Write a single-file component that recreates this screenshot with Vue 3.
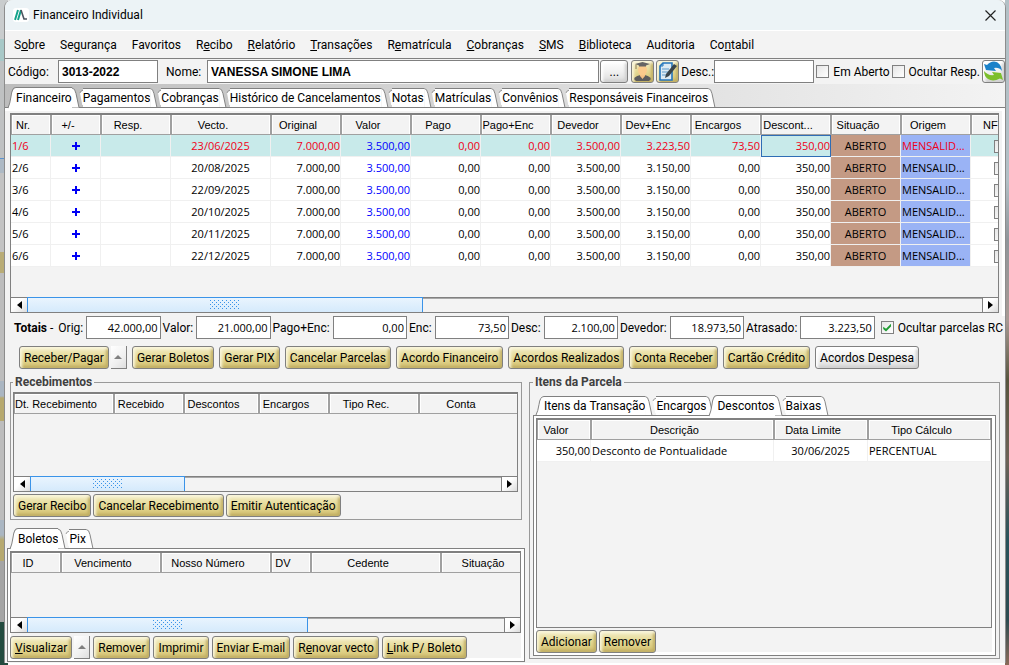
<script setup>
import { ref } from 'vue'

const menu = [
  ['S', 'o', 'bre'], ['Se', 'g', 'urança'], ['Favoritos', '', ''], ['R', 'e', 'cibo'],
  ['', 'R', 'elatório'], ['', 'T', 'ransações'], ['R', 'e', 'matrícula'], ['', 'C', 'obranças'],
  ['', 'S', 'MS'], ['', 'B', 'iblioteca'], ['Auditoria', '', ''], ['Co', 'n', 'tabil']
]
const mainTabs = ['Financeiro', 'Pagamentos', 'Cobranças', 'Histórico de Cancelamentos', 'Notas', 'Matrículas', 'Convênios', 'Responsáveis Financeiros']
const itemTabs = ['Itens da Transação', 'Encargos', 'Descontos', 'Baixas']
const slipTabs = ['Boletos', 'Pix']

const cols = [
  ['Nr.', 40, 'l'], ['+/-', 50], ['Resp.', 70], ['Vecto.', 100], ['Original', 70],
  ['Valor', 70], ['Pago', 70], ['Pago+Enc', 70], ['Devedor', 70], ['Dev+Enc', 70],
  ['Encargos', 70], ['Descont...', 70], ['Situação', 70], ['Origem', 70], ['NF', 60, 'nf']
]
const rows = [
  ['1/6', '23/06/2025', '3.223,50', '73,50'],
  ['2/6', '20/08/2025', '3.150,00', '0,00'],
  ['3/6', '22/09/2025', '3.150,00', '0,00'],
  ['4/6', '20/10/2025', '3.150,00', '0,00'],
  ['5/6', '20/11/2025', '3.150,00', '0,00'],
  ['6/6', '22/12/2025', '3.150,00', '0,00']
]
const totals = [
  ['Orig:', '42.000,00'], ['Valor:', '21.000,00'], ['Pago+Enc:', '0,00'], ['Enc:', '73,50'],
  ['Desc:', '2.100,00'], ['Devedor:', '18.973,50'], ['Atrasado:', '3.223,50']
]
const actions = ['Gerar Boletos', 'Gerar PIX', 'Cancelar Parcelas', 'Acordo Financeiro', 'Acordos Realizados', 'Conta Receber', 'Cartão Crédito']
const receiptCols = [['Dt. Recebimento', 100], ['Recebido', 70], ['Descontos', 75], ['Encargos', 70], ['Tipo Rec.', 90], ['Conta', 100]]
const slipCols = [['ID', 50], ['Vencimento', 100], ['Nosso Número', 110], ['DV', 40], ['Cedente', 130], ['Situação', 100]]
const itemCols = [['Valor', 54], ['Descrição', 183], ['Data Limite', 94], ['Tipo Cálculo', 123]]
const thumbs = { main: 41.5, receipts: 33, slips: 59 }

const code = ref('3013-2022')
const name = ref('VANESSA SIMONE LIMA')
const desc = ref('')
const onlyOpen = ref(false)
const hideResp = ref(false)
const hideRc = ref(true)
</script>

<template>
  <div class="desktop">
    <main class="window">
      <header class="title">
        <svg class="logo" viewBox="0 0 14 12" width="14" height="12" aria-hidden="true">
          <path d="M1 11 L4 1 M4 11 L7 1" stroke="#14a38b" stroke-width="2" fill="none" />
          <path d="M7 1 L10 10 H13" stroke="#4b5560" stroke-width="1.6" fill="none" />
        </svg>
        <h1>Financeiro Individual</h1>
        <button class="close" aria-label="Fechar">
          <svg viewBox="0 0 11 11" width="11" height="11"><path d="M.5 .5 L10.5 10.5 M10.5 .5 L.5 10.5" stroke="#222" stroke-width="1.2" /></svg>
        </button>
      </header>

      <nav class="menu">
        <a v-for="m in menu" :key="m.join('')" href="#">{{ m[0] }}<u>{{ m[1] }}</u>{{ m[2] }}</a>
      </nav>

      <section class="search">
        <label class="lab-code" for="code">Código:</label>
        <input id="code" v-model="code" class="field short strong" type="text">
        <label class="lab-name" for="name">Nome:</label>
        <input id="name" v-model="name" class="field grow strong" type="text">
        <button class="btn plain dots">...</button>
        <button class="btn icon" aria-label="Aluno">
          <svg viewBox="0 0 21 21" width="21" height="21">
            <path d="M2 18 Q4 14 10.5 14 Q17 14 19 18 L17 20 H4Z" fill="#5d5d5d" />
            <path d="M8 12 H13 V15 L10.5 18 L8 15Z" fill="#f5c083" />
            <ellipse cx="10.5" cy="9" rx="4.500" ry="5.500" fill="#fbcb8c" />
            <path d="M3 3 L10.5 1 L18 3 L14 4.5 V5.500 H7 V4.5Z" fill="#656565" />
            <path d="M4 3.5 V8" stroke="#8b7a55" />
          </svg>
        </button>
        <button class="btn icon" aria-label="Anotações">
          <svg viewBox="0 0 21 21" width="21" height="21">
            <path d="M6 2 H15 V19 H3 V5Z" fill="#ddeaf2" stroke="#2476bd" stroke-width="1.6" />
            <path d="M6 2 V5 H3" fill="none" stroke="#2476bd" />
            <path d="M5 8 H12 M5 11 H11 M5 14 H9" stroke="#5e9bcb" />
            <path d="M17 3 L20 5 L12 15 L8 17 L9 13Z" fill="#3a454c" />
          </svg>
        </button>
        <label class="lab-desc" for="desc">Desc.:</label>
        <input id="desc" v-model="desc" class="field short" type="text">
        <label class="check"><input v-model="onlyOpen" type="checkbox">Em Aberto</label>
        <label class="check"><input v-model="hideResp" type="checkbox">Ocultar Resp.</label>
        <button class="btn plain icon last" aria-label="Atualizar">
          <svg viewBox="0 0 21 21" width="21" height="21">
            <path d="M1 3 L4 4 Q7 .5 11 .5 Q18 1 19 10 Q16 6 11 7 L13 10 L3 9Z" fill="#1c82c9" />
            <path d="M1 10 Q5 15 11 14 L9 11 L18 12 L20 19 L17 17.5 Q10 21 5 18 Q1 15 1 10Z" fill="#7cbf2d" />
          </svg>
        </button>
      </section>

      <div class="tabs main-tabs" role="tablist">
        <button v-for="(t, i) in mainTabs" :key="t" role="tab" class="tab" :class="{ on: i === 0, first: i === 0 }" :aria-selected="i === 0">
          <svg class="lead" viewBox="0 0 8 20" preserveAspectRatio="none"><path class="fill" d="M0 20 Q2 16 3 9 Q4 .5 8 .5 V20Z" /><path class="line" d="M0 20 Q2 16 3 9 Q4 .5 8 .5" /></svg>
          <svg class="notch" viewBox="0 0 4 20"><path class="fill" d="M0 4 Q1 .5 4 .5 V20 H3Z" /><path class="line" d="M0 4 Q1 .5 4 .5" /></svg>
          <span>{{ t }}</span>
          <svg class="trail" viewBox="0 0 8 20"><path class="fill" d="M0 .5 Q3 .5 4 6 L7 20 H0Z" /><path class="line" d="M0 .5 Q3 .5 4 6 L7 20" /></svg>
        </button>
      </div>

      <section class="pane main-pane">
        <div class="gridbox">
          <div class="clip">
            <table class="grid">
              <colgroup><col v-for="c in cols" :key="c[0]" :style="{ width: c[1] + 'px' }"></colgroup>
              <thead><tr><th v-for="c in cols" :key="c[0]" :class="c[2]">{{ c[0] }}</th></tr></thead>
              <tbody>
                <tr v-for="(r, i) in rows" :key="r[0]" :class="{ sel: i === 0 }">
                  <td>{{ r[0] }}</td>
                  <td class="plus"><svg viewBox="0 0 8 8" width="8" height="8"><path d="M4 0 V8 M0 4 H8" stroke="#0000f5" stroke-width="2" /></svg></td>
                  <td></td>
                  <td class="c">{{ r[1] }}</td>
                  <td class="n">7.000,00</td>
                  <td class="n blue">3.500,00</td>
                  <td class="n">0,00</td>
                  <td class="n">0,00</td>
                  <td class="n">3.500,00</td>
                  <td class="n">{{ r[2] }}</td>
                  <td class="n">{{ r[3] }}</td>
                  <td class="n focus">350,00</td>
                  <td class="state">ABERTO</td>
                  <td class="origin">MENSALID...</td>
                  <td class="c"><input type="checkbox" aria-label="NF"></td>
                </tr>
              </tbody>
            </table>
          </div>
          <div class="space"></div>
          <div class="bar">
            <button class="arrow" aria-label="Esquerda"><i class="left"></i></button>
            <div class="track"><div class="thumb" :style="{ width: thumbs.main + '%' }"><i class="grip"></i></div></div>
            <button class="arrow" aria-label="Direita"><i class="right"></i></button>
          </div>
        </div>
      </section>

      <section class="totals">
        <span class="tot"><b>Totais</b> -</span>
        <template v-for="t in totals" :key="t[0]">
          <label class="tl" :for="'t' + t[0]">{{ t[0] }}</label>
          <input :id="'t' + t[0]" class="field num" type="text" :value="t[1]" readonly>
        </template>
        <label class="check rc"><input v-model="hideRc" type="checkbox">Ocultar parcelas RC</label>
      </section>

      <section class="actions">
        <span class="split"><button class="btn">Receber/Pagar</button><button class="up" aria-label="Mais"><i></i></button></span>
        <button v-for="a in actions" :key="a" class="btn">{{ a }}</button>
        <button class="btn plain">Acordos Despesa</button>
      </section>

      <div class="lower">
        <div class="left-col">
          <fieldset class="group receipts">
            <legend>Recebimentos</legend>
            <div class="gridbox">
              <div class="clip">
                <table class="grid">
                  <colgroup><col v-for="c in receiptCols" :key="c[0]" :style="{ width: c[1] + 'px' }"></colgroup>
                  <thead><tr><th v-for="c in receiptCols" :key="c[0]">{{ c[0] }}</th></tr></thead>
                </table>
              </div>
              <div class="space"></div>
              <div class="bar">
                <button class="arrow" aria-label="Esquerda"><i class="left"></i></button>
                <div class="track"><div class="thumb" :style="{ width: thumbs.receipts + '%' }"><i class="grip"></i></div></div>
                <button class="arrow" aria-label="Direita"><i class="right"></i></button>
              </div>
            </div>
            <div class="row">
              <button class="btn">Gerar Recibo</button>
              <button class="btn">Cancelar Recebimento</button>
              <button class="btn">Emitir Autenticação</button>
            </div>
          </fieldset>

          <div class="tabs slip-tabs" role="tablist">
            <button v-for="(t, i) in slipTabs" :key="t" role="tab" class="tab" :class="{ on: i === 0, first: i === 0 }" :aria-selected="i === 0">
              <svg class="lead" viewBox="0 0 8 20" preserveAspectRatio="none"><path class="fill" d="M0 20 Q2 16 3 9 Q4 .5 8 .5 V20Z" /><path class="line" d="M0 20 Q2 16 3 9 Q4 .5 8 .5" /></svg>
              <svg class="notch" viewBox="0 0 4 20"><path class="fill" d="M0 4 Q1 .5 4 .5 V20 H3Z" /><path class="line" d="M0 4 Q1 .5 4 .5" /></svg>
              <span>{{ t }}</span>
              <svg class="trail" viewBox="0 0 8 20"><path class="fill" d="M0 .5 Q3 .5 4 6 L7 20 H0Z" /><path class="line" d="M0 .5 Q3 .5 4 6 L7 20" /></svg>
            </button>
          </div>
          <section class="pane framed slips">
            <div class="gridbox">
              <div class="clip">
                <table class="grid">
                  <colgroup><col v-for="c in slipCols" :key="c[0]" :style="{ width: c[1] + 'px' }"></colgroup>
                  <thead><tr><th v-for="c in slipCols" :key="c[0]">{{ c[0] }}</th></tr></thead>
                </table>
              </div>
              <div class="space"></div>
              <div class="bar">
                <button class="arrow" aria-label="Esquerda"><i class="left"></i></button>
                <div class="track"><div class="thumb" :style="{ width: thumbs.slips + '%' }"><i class="grip"></i></div></div>
                <button class="arrow" aria-label="Direita"><i class="right"></i></button>
              </div>
            </div>
            <div class="row">
              <span class="split"><button class="btn"><u>V</u>isualizar</button><button class="up" aria-label="Mais"><i></i></button></span>
              <button class="btn">Remover</button>
              <button class="btn">Imprimir</button>
              <button class="btn">Enviar E-mail</button>
              <button class="btn">R<u>e</u>novar vecto</button>
              <button class="btn"><u>L</u>ink P/ Boleto</button>
            </div>
          </section>
        </div>

        <fieldset class="group items">
          <legend>Itens da Parcela</legend>
          <div class="tabs item-tabs" role="tablist">
            <button v-for="(t, i) in itemTabs" :key="t" role="tab" class="tab" :class="{ on: i === 2, first: i === 0 }" :aria-selected="i === 2">
              <svg class="lead" viewBox="0 0 8 20" preserveAspectRatio="none"><path class="fill" d="M0 20 Q2 16 3 9 Q4 .5 8 .5 V20Z" /><path class="line" d="M0 20 Q2 16 3 9 Q4 .5 8 .5" /></svg>
              <svg class="notch" viewBox="0 0 4 20"><path class="fill" d="M0 4 Q1 .5 4 .5 V20 H3Z" /><path class="line" d="M0 4 Q1 .5 4 .5" /></svg>
              <span>{{ t }}</span>
              <svg class="trail" viewBox="0 0 8 20"><path class="fill" d="M0 .5 Q3 .5 4 6 L7 20 H0Z" /><path class="line" d="M0 .5 Q3 .5 4 6 L7 20" /></svg>
            </button>
          </div>
          <section class="pane framed">
            <div class="gridbox">
              <div class="clip">
                <table class="grid">
                  <colgroup><col v-for="c in itemCols" :key="c[0]" :style="{ width: c[1] + 'px' }"></colgroup>
                  <thead><tr><th v-for="c in itemCols" :key="c[0]">{{ c[0] }}</th></tr></thead>
                  <tbody>
                    <tr><td class="n">350,00</td><td>Desconto de Pontualidade</td><td class="c">30/06/2025</td><td>PERCENTUAL</td></tr>
                  </tbody>
                </table>
              </div>
            </div>
            <div class="row">
              <button class="btn">Adicionar</button>
              <button class="btn">Remover</button>
            </div>
          </section>
        </fieldset>
      </div>
    </main>
  </div>
</template>

<style>
body { background: #c4c6c7; }
</style>

<style scoped>
.desktop {
  box-sizing: border-box;
  min-height: 100vh;
  padding: 0 3px 2px 4px;
  display: flex;
  background:
    linear-gradient(#b3c0c6 0 180px, #90959a 240px, #a99a94 320px, #58553e 380px, #6d6257 460px, #29525a 540px, #2d4b50 620px, #8a6a58) right / 4px 100% no-repeat,
    linear-gradient(#c9cccd 0 39px, #a8c8c7 39px 61px, #bfc1c2 61px 158px, #5b93cf 158px 159px, #adb9c4 159px 173px, #c2c2c2 173px 252px, #b9ac76 252px 273px, #bdbdbd 273px 381px, #aab6c2 381px 396px, #b6a970 398px 421px, #bdbdbd 421px 520px, #aab6c2 520px 535px, #b6a970 540px 561px, #a5a5a5 561px 622px, #234b3f 622px) left / 8px 100% no-repeat,
    #fff;
  font: 12px/14px Roboto, "Liberation Sans", sans-serif;
  color: #000;
}
.window {
  flex: 1;
  min-width: 0;
  display: flex;
  flex-direction: column;
  background: #f3f3f3;
  border: solid #8c8c8c;
  border-width: 0 1px;
  border-radius: 8px 8px 0 0;
}
button, input, a { font: inherit; color: inherit; }
button { cursor: default; white-space: nowrap; }

.title {
  display: flex;
  align-items: center;
  gap: 4px;
  height: 30px;
  padding: 0 9px 0 8px;
  background: #ecf3f6;
  border-bottom: 1px solid #fff;
  border-radius: 8px 8px 0 0;
}
.logo { background: #fff; border-radius: 3px; padding: 1px; }
h1 { margin: 0; flex: 1; font-size: 12px; font-weight: 400; }
.close { width: 11px; height: 11px; padding: 0; border: 0; background: none; display: flex; }

.menu {
  display: flex;
  gap: 15px;
  height: 27px;
  padding: 0 9px;
  align-items: center;
  border-bottom: 1px solid #808080;
}
.menu a { text-decoration: none; white-space: nowrap; }

.search { display: flex; align-items: center; height: 25px; padding-left: 3px; white-space: nowrap; }
.lab-code { width: 50px; }
.lab-name { width: 41px; margin-left: 8px; }
.lab-desc { width: 33px; }
.field {
  box-sizing: border-box;
  height: 23px;
  min-width: 0;
  border: 1px solid #808080;
  background: #fff;
  padding: 0 3px;
  outline: 0;
}
.short { width: 100px; }
.grow { flex: 1; }
.strong { font: bold 12px "Liberation Sans", Arial, sans-serif; }
.check { display: flex; align-items: center; gap: 4px; margin: 0 0 0 2px; white-space: nowrap; }
input[type="checkbox"] {
  appearance: none;
  flex: none;
  box-sizing: border-box;
  width: 13px;
  height: 13px;
  margin: 0;
  border: 1px solid #808080;
  background: linear-gradient(135deg, #e6e6e6, #fff);
}
input[type="checkbox"]:checked { display: grid; place-items: center; }
input[type="checkbox"]:checked::before {
  content: "";
  width: 8px;
  height: 8px;
  background: #1f9c33;
  clip-path: polygon(0 40%, 35% 65%, 100% 0, 100% 35%, 35% 100%, 0 70%);
}

.btn {
  box-sizing: border-box;
  height: 23px;
  padding: 0 4px;
  border: 1px solid #808080;
  border-radius: 3px;
  background: linear-gradient(#f3edc8, #e6db98 45%, #dccd82 75%, #cfbe70);
  box-shadow: inset 2px 2px 3px #faf6dc, inset -2px -2px 3px #c0ae63;
}
.plain {
  background: linear-gradient(#fff, #f1f1f1 50%, #dcdcdc);
  box-shadow: inset 2px 2px 3px #fff, inset -2px -2px 3px #cfcfcf;
}
.icon { width: 23px; padding: 0; margin-right: 2px; display: flex; flex: none; }
.last { margin: 0 0 0 2px; }
.dots { width: 28px; margin: 0 3px 0 1px; }
.split { display: flex; align-items: flex-end; gap: 2px; }
.up {
  box-sizing: border-box;
  width: 16px;
  height: 23px;
  padding: 0;
  display: grid;
  place-items: center;
  border: solid #808080;
  border-width: 0 1px 1px 0;
  background: linear-gradient(135deg, #fff, #f0f0f0 60%, #dedede);
}
.up i { border: solid transparent; border-width: 0 4px 4px; border-bottom-color: #808080; }

.tabs { display: flex; align-items: flex-end; padding-left: 3px; }
.main-tabs { padding-top: 3px; background: linear-gradient(90deg, #bdbdbd, #f3f3f3); }
.tab {
  height: 19px;
  padding: 0;
  border: 0;
  background: none;
  display: flex;
  align-items: stretch;
}
.tab span { display: flex; align-items: center; border-top: 1px solid #808080; background: #fff; }
.tab svg { flex: none; width: 8px; height: 100%; overflow: visible; }
.tab .notch { width: 3px; }
.tab .lead { display: none; }
.tab.first .lead { display: block; }
.tab.first .notch { display: none; }
.tab.on { height: 21px; margin-bottom: -1px; position: relative; }
.tab.on:not(.first) .notch { display: none; }
.tab.on:not(.first) .lead { display: block; margin-left: -5px; }
.fill { fill: #fff; }
.line { fill: none; stroke: #808080; }

.pane { border-top: 1px solid #808080; background: #f3f3f3; box-shadow: inset 0 0 0 3px #fff; }
.main-pane { padding: 5px 6px 3px 5px; box-shadow: inset 0 3px #fff, inset -3px 0 #fff; }
.framed { border: 1px solid #808080; padding: 2px 3px 2px 2px; display: flex; flex-direction: column; flex: 1; }

.gridbox {
  min-width: 0;
  border: 1px solid #808080;
  border-top-width: 2px;
  display: flex;
  flex-direction: column;
  background: #f3f3f3;
}
.clip { overflow: hidden; }
.space { flex: 1; min-height: 30px; }
.grid { table-layout: fixed; width: 0; border-collapse: separate; border-spacing: 0; }
.grid th {
  box-sizing: border-box;
  height: 20px;
  padding: 0 16px 0 0;
  border: solid #a0a0a0;
  border-width: 0 1px 1px 1px;
  box-shadow: inset 1px 1px #fff, inset -1px 0 #fff;
  background: #f3f3f3;
  font: 11px/18px "Liberation Sans", Arial, sans-serif;
  text-align: center;
  white-space: nowrap;
}
.grid th.l { text-align: left; padding: 0 0 0 4px; }
.grid th.nf { text-align: left; padding: 0 0 0 11px; }
.grid td {
  box-sizing: border-box;
  height: 22px;
  padding: 0 1px;
  border: solid #f0f0f0;
  border-width: 0 1px 1px 0;
  background: #fff;
  font: 11px/20px "Open Sans", "Noto Sans", sans-serif;
  white-space: nowrap;
  overflow: hidden;
}
.grid .n { text-align: right; padding-right: 0; }
.grid .c, .grid .plus { text-align: center; }
.grid .blue, .grid .sel .blue { color: #00f; }
.grid .sel td { background: #c8eaea; color: #f00018; }
.grid .sel .focus { border: 1px solid #2f6db5; }
.grid .state, .grid .sel .state { background: #c49a84; color: #000; text-align: center; }
.grid .origin, .grid .sel .origin { background: #9ab3f5; }
.grid td input { vertical-align: middle; }

.bar { display: flex; height: 14px; border-top: 1px solid #808080; }
.arrow { flex: none; width: 16px; padding: 0; border: 0; display: grid; place-items: center; background: linear-gradient(135deg, #fff 40%, #dcdcdc); }
.arrow:last-child { border-left: 1px solid #808080; }
.arrow i { border: solid transparent; }
.arrow .left { border-width: 4px 5px 4px 0; border-right-color: #000; }
.arrow .right { border-width: 4px 0 4px 5px; border-left-color: #000; }
.track { flex: 1; box-shadow: inset 0 1px #a8a8a8; }
.thumb {
  box-sizing: border-box;
  height: 15px;
  margin-top: -1px;
  display: grid;
  place-items: center;
  border: solid #3a93e8;
  border-width: 1px 1px 0;
  background: linear-gradient(#e9f4fe, #d5eafc);
}
.grip {
  width: 30px;
  height: 10px;
  background:
    conic-gradient(from 270deg at 1px 1px, #3a93e8 90deg, transparent 0) 0 0 / 4px 4px,
    conic-gradient(from 270deg at 1px 1px, #3a93e8 90deg, transparent 0) 2px 2px / 4px 4px;
}

.totals { display: flex; align-items: center; gap: 2px; padding: 0 0 0 9px; white-space: nowrap; overflow: hidden; }
.tot { margin-right: 3px; }
.tl { margin-right: 1px; }
.num { flex: 1 1 60px; padding: 0 2px; text-align: right; font: 11px "Open Sans", "Noto Sans", sans-serif; }
.rc { margin: 0 2px 0 4px; }

.actions { display: flex; gap: 5px; padding: 7px 14px 6px; }

.lower { flex: 1; display: grid; grid-template-columns: 518fr 471fr; gap: 4px; padding: 0 5px 1px 2px; }
.left-col { display: flex; flex-direction: column; min-width: 0; }
.group {
  min-width: 0;
  margin: 0;
  padding: 3px 3px 2px;
  border: 1px solid #999;
  display: flex;
  flex-direction: column;
}
legend { margin-left: 0; padding: 0 2px; font-weight: 700; color: #404040; }
.receipts { margin: 0 3px; padding-left: 2px; }
.receipts .gridbox { height: 97px; }
.row { display: flex; gap: 2px; padding-top: 2px; }
.slip-tabs { margin-top: 8px; }
.slips .gridbox { flex: 1; }
.slips .row { gap: 3px; padding-top: 3px; }
.items { margin-bottom: 3px; }
.items .gridbox { flex: 1; }
.item-tabs { padding-top: 3px; }
</style>
